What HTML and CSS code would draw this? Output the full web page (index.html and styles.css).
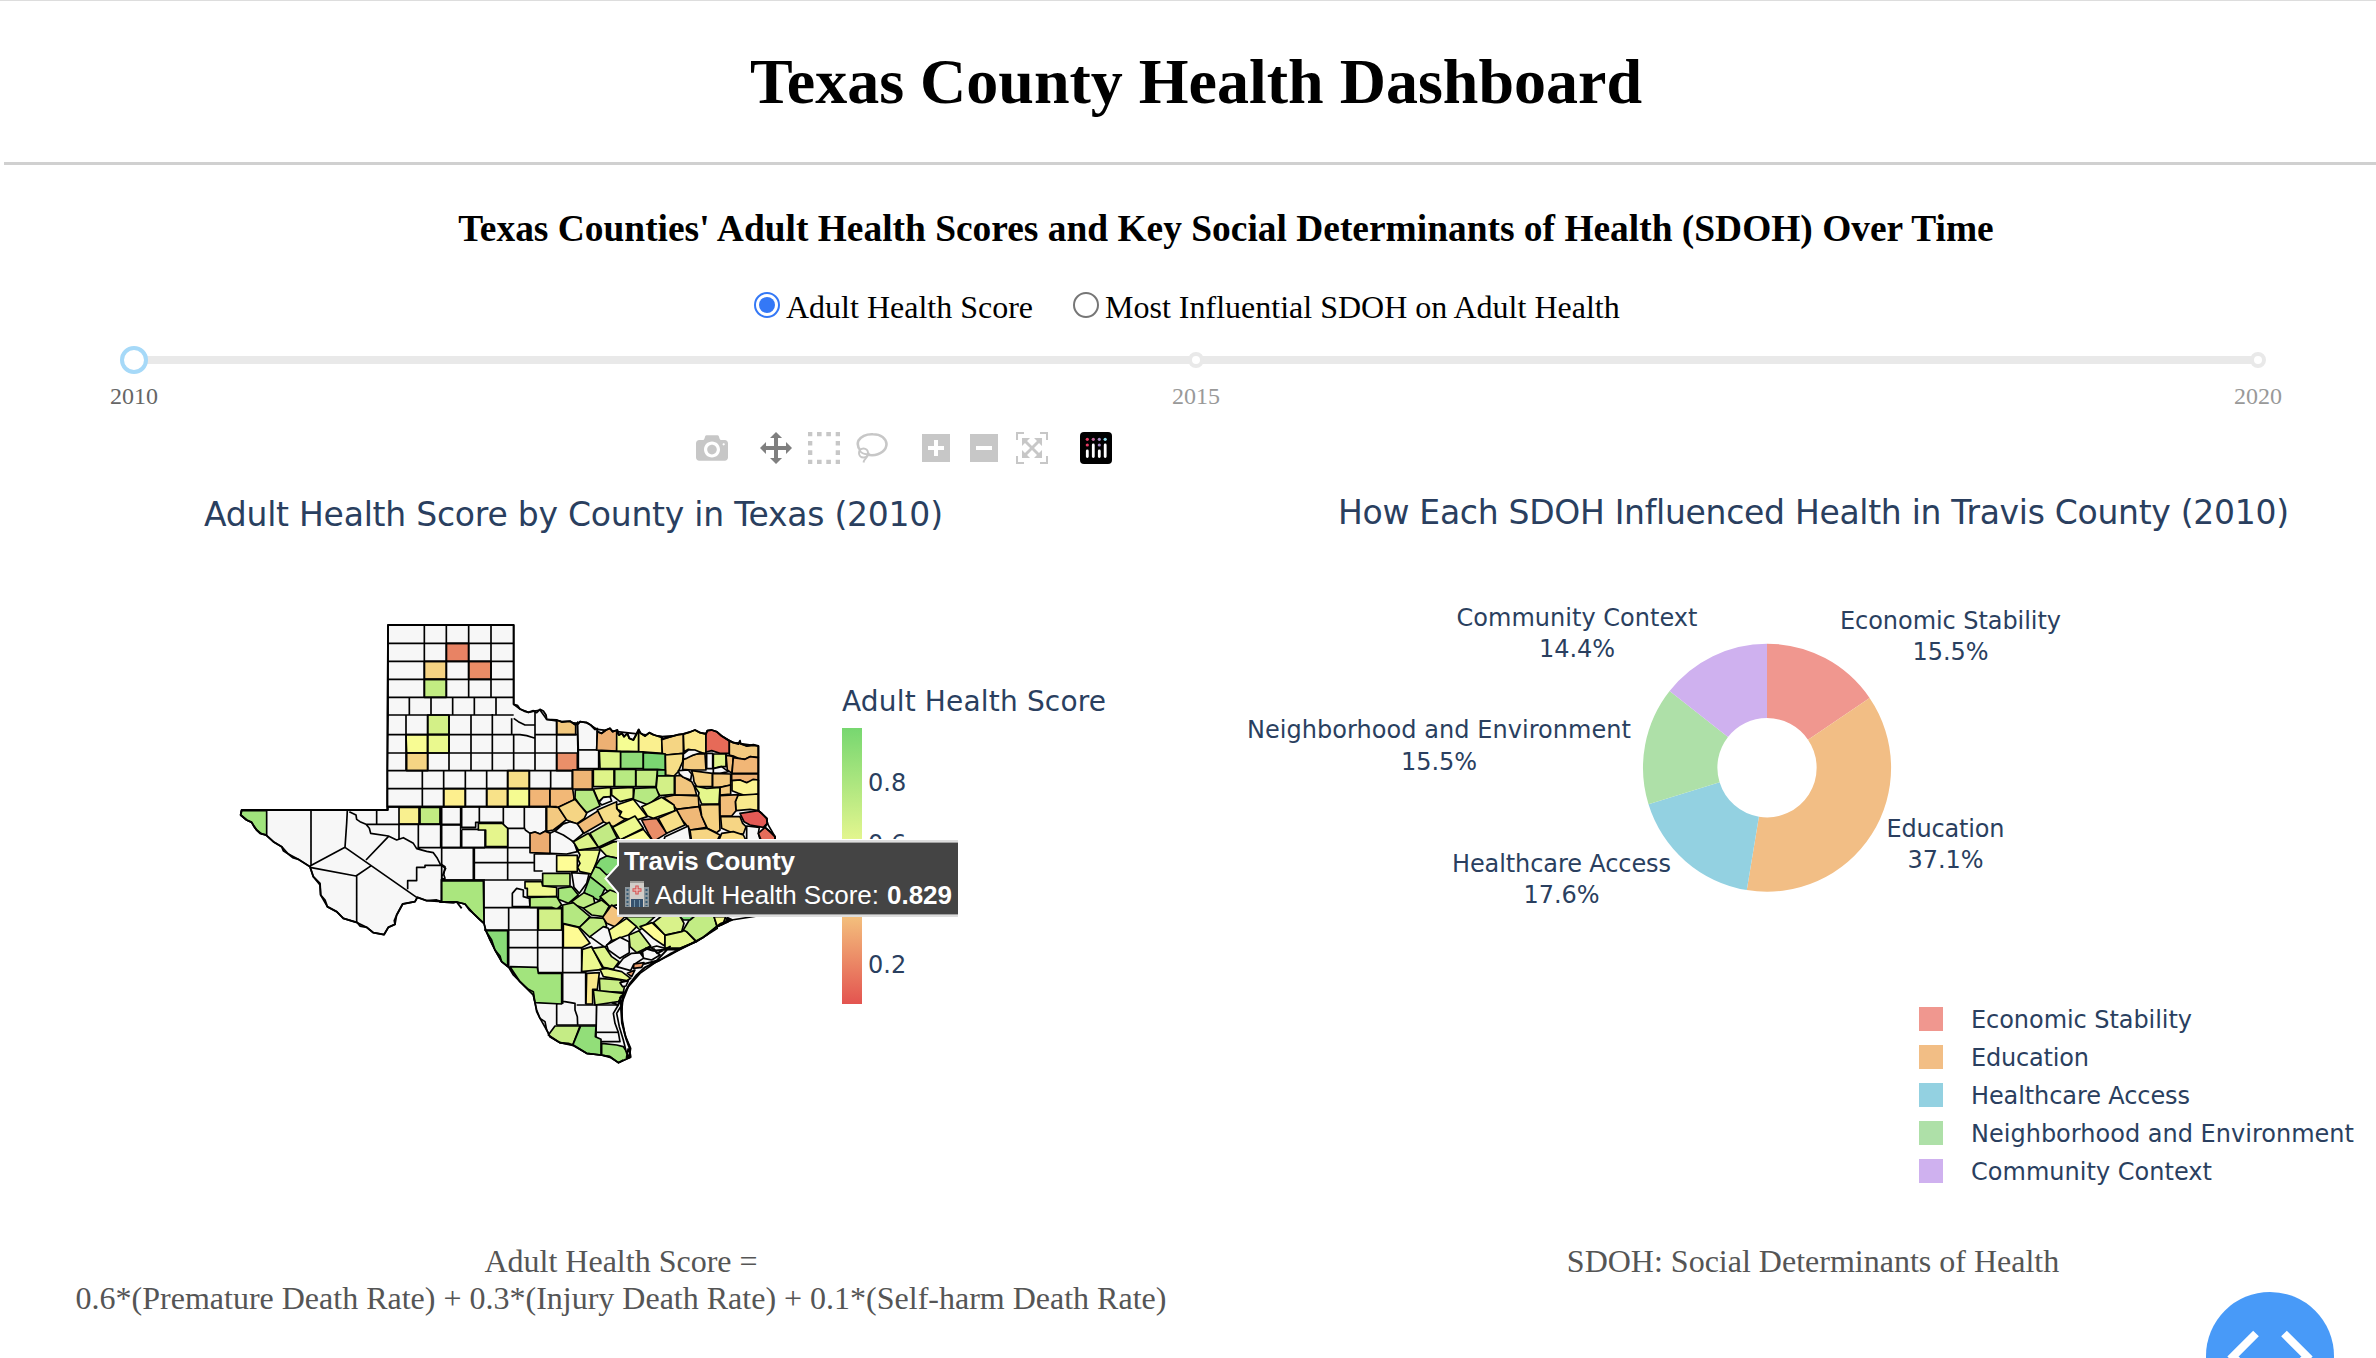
FILE: index.html
```html
<!DOCTYPE html>
<html lang="en">
<head>
<meta charset="utf-8">
<title>Texas County Health Dashboard</title>
<link rel="stylesheet" href="styles.css">
</head>
<body>
<header class="page-header"><h1>Texas County Health Dashboard</h1></header>
<main>
<h2>Texas Counties' Adult Health Scores and Key Social Determinants of Health (SDOH) Over Time</h2>
<div class="options">
<label class="option"><span class="radio checked"></span>Adult Health Score</label>
<label class="option"><span class="radio"></span>Most Influential SDOH on Adult Health</label>
</div>
<div class="slider">
<div class="rail"><span class="handle"></span><span class="dot"></span><span class="dot"></span></div>
<div class="marks"><span class="active">2010</span><span>2015</span><span>2020</span></div>
</div>
<div class="charts">
<section class="chart">
<div class="modebar">
<div class="tools"><svg viewBox="0 0 1000 1000"><path transform="matrix(1 0 0 -1 0 850)" d="m500 450c-83 0-150-67-150-150 0-83 67-150 150-150 83 0 150 67 150 150 0 83-67 150-150 150z m400 150h-120c-16 0-34 13-39 29l-31 93c-6 15-23 28-40 28h-340c-16 0-34-13-39-28l-31-94c-6-15-23-28-40-28h-120c-55 0-100-45-100-100v-450c0-55 45-100 100-100h800c55 0 100 45 100 100v450c0 55-45 100-100 100z m-400-550c-138 0-250 112-250 250 0 138 112 250 250 250 138 0 250-112 250-250 0-138-112-250-250-250z m365 380c-19 0-35 16-35 35 0 19 16 35 35 35 19 0 35-16 35-35 0-19-16-35-35-35z"/></svg></div>
<div class="tools">
<svg class="on" viewBox="0 0 1000 1000"><path transform="matrix(1 0 0 -1 0 850)" d="m1000 350l-187 188 0-125-250 0 0 250 125 0-188 187-187-187 125 0 0-250-250 0 0 125-188-188 186-187 0 125 252 0 0-250-125 0 187-188 188 188-125 0 0 250 250 0 0-126 187 188z"/></svg>
<svg viewBox="0 0 32 32"><path d="M0 0h4.3v4.3H0zM9 0h4.6v4.3H9zM18.3 0h4.6v4.3h-4.6zM27.7 0H32v4.3h-4.3zM0 9h4.3v4.6H0zM27.7 9H32v4.6h-4.3zM0 18.3h4.3v4.6H0zM27.7 18.3H32v4.6h-4.3zM0 27.7h4.3V32H0zM9 27.7h4.6V32H9zM18.3 27.7h4.6V32h-4.6zM27.7 27.7H32V32h-4.3z"/></svg>
<svg viewBox="0 0 32 32"><g fill="none" stroke="#c7c7c7" stroke-width="2.6"><path d="M4.5 18.5C1.5 15 1 12 2.5 8.500 6 3 12 2 17 2.200c8 0 13 4 13.500 9.800 0 6-6 11-14.500 11.200-2 0-3-.2-4.500-.6"/><circle cx="7.500" cy="21" r="4.500" stroke-width="2"/><path d="M3.500 18.500c3 4 6 4 9 3.500-1 4-4 4-5 8.500" stroke-width="2"/></g></svg>
</div>
<div class="tools">
<svg viewBox="0 0 32 32"><path fill-rule="evenodd" d="M2 2h28v28H2zM14 8v6H8v4h6v6h4v-6h6v-4h-6V8z"/></svg>
<svg viewBox="0 0 32 32"><path fill-rule="evenodd" d="M2 2h28v28H2zM8 14v4h16v-4z"/></svg>
<svg viewBox="0 0 1000 1000"><path transform="matrix(1 0 0 -1 0 850)" d="m250 850l-187 0-63 0 0-62 0-188 63 0 0 188 187 0 0 62z m688 0l-188 0 0-62 188 0 0-188 62 0 0 188 0 62-62 0z m-875-938l0 188-63 0 0-188 0-62 63 0 187 0 0 62-187 0z m875 188l0-188-188 0 0-62 188 0 62 0 0 62 0 188-62 0z m-125 188l-1 0-93-94-156 156 156 156 92-93 2 0 0 250-250 0 0-2 93-92-156-156-156 156 94 92 0 2-250 0 0-250 0 0 93 93 157-156-157-156-93 94 0 0 0-250 250 0 0 0-94 93 156 157 156-157-93-93 0 0 250 0 0 250z"/></svg>
</div>
<div class="tools"><svg viewBox="0 0 32 32"><rect width="32" height="32" rx="4" fill="#000"/><g stroke="#fff" stroke-width="2.800" stroke-linecap="round"><path d="M7.300 19v5.500M13.300 13v11.500M19.300 19v5.500M25.200 13v11.500"/></g><g fill="#e93b62"><circle cx="7.300" cy="7.300" r="1.600"/><circle cx="7.300" cy="13" r="1.600"/></g><circle cx="13.300" cy="7.300" r="1.600" fill="#c4689c"/><g fill="#a78bc4"><circle cx="19.300" cy="7.300" r="1.600"/><circle cx="19.300" cy="13" r="1.600"/></g><circle cx="25.200" cy="7.300" r="1.600" fill="#8edcec"/></svg></div>
</div>
<svg class="plot" viewBox="0 470 1188 740">
<defs><linearGradient id="scale" x1="0" y1="0" x2="0" y2="1"><stop offset="0" stop-color="#77d770"/><stop offset=".5" stop-color="#fdfd96"/><stop offset="1" stop-color="#e35450"/></linearGradient></defs>
<text class="title" x="204" y="526" textLength="739">Adult Health Score by County in Texas (2010)</text>
<g class="map">
<!-- central and southern counties -->
<g transform="translate(440 780) scale(.33333)">
<path class="land" d="M0 80H407L600 0H955V92L980 115 984 140 1000 175 1000 400 875 420 830 440 768 485 720 508 690 525 650 545 600 580 565 620 545 670 545 720 555 770 568 800 572 832 535 848 510 832 483 825 440 820 400 795 360 788 330 770 320 750 300 715 290 690 285 668 280 645 240 605 210 565 185 545 165 510 150 480 137 450 132 430 100 400 75 372 50 366 40 368 0 366Z"/>
<path d="M2 80V203M65 80V145M118 80V127M190 80V138L203 145V300M253 80V143L256 150 270 160 285 156 300 162 315 154 330 160M318 80V156M2 135H62M65 142H107V127H187M203 145H253M65 150V203M65 148H135V203M0 203H282M103 203V300M206 248H103M206 248H282M283 222V273H308M283 222H350M103 248V300M0 300H305M132 303V430M217 380 217 340 230 325 250 330 250 350 268 355 270 380ZM132 383H370M206 383V560M293 383V580M368 375V672M132 450H368M206 503H425M293 578H440M425 503V578M437 578V672M350 672V735M350 672 370 664 405 670 405 690 412 710 413 735M410 675H470V757H535M350 735H468M330 160 345 152 370 160 390 175 403 190 412 215 380 222 330 220M345 152 370 130 400 128 425 145 403 190M0 250 15 260 12 280 3 292 15 300"/>
<path fill="#e5f58c" d="M115 130H187L203 145V200H137V150H115Z"/>
<path fill="#ecac71" d="M270 160 285 156 300 162 315 154 330 160V220L270 218Z"/>
<path fill="#fefd96" d="M350 226H412V275H350Z"/>
<path fill="#f0fa90" d="M412 210 480 210 470 245 455 282 420 275 413 262 420 250 414 238 420 225Z"/>
<path fill="#dcf389" d="M403 185 448 160 478 202 415 210Z"/>
<path fill="#c2ea84" d="M450 160 508 127 532 175 478 202Z"/>
<path fill="#dbf389" d="M478 205 580 160V250L535 235 500 228Z"/>
<path fill="#82d975" d="M465 260 480 238 500 228 535 235V280L500 285Z"/>
<path fill="#a7e67e" d="M450 290 465 260 480 265 500 285 540 270V345L515 345 490 322Z"/>
<path fill="#8fdd79" d="M432 338 450 290 495 325 478 362 445 345Z"/>
<path fill="#c2ec82" d="M308 280H390V318H308Z"/>
<path fill="#f7f7f7" d="M395 278 447 282 440 310 418 340 402 322Z"/>
<path fill="#a5e57d" d="M355 325 395 320 415 345 385 370 355 358Z"/>
<path fill="#eff990" d="M255 305 305 305 308 318 350 322V350H262V325H255Z"/>
<path fill="#b5e981" d="M270 352 350 350 365 375 350 388 335 382H270Z"/>
<path fill="#aae67e" d="M0 303H130L132 430 100 400 75 372 50 366 0 366Z"/>
<path fill="#bdea83" d="M395 365 432 338 460 350 465 372 440 388 405 375Z"/>
<path fill="#bfeb83" d="M430 385 485 360 508 378 490 410 455 405Z"/>
<path fill="#bfeb83" d="M480 350 510 330 550 345V370L510 380Z"/>
<path fill="#b4e881" d="M368 375 400 368 450 410 420 442 368 430Z"/>
<path fill="#d2f088" d="M295 386H365V450H295Z"/>
<path fill="#c2ec84" d="M418 442 450 412 492 415 500 438 450 472Z"/>
<path fill="#f4c47d" d="M488 412 515 375 560 405 525 440 500 430Z"/>
<path fill="#fefb94" d="M370 432 415 442 450 490 425 503H370Z"/>
<path fill="#b8e981" d="M555 410H645L600 450Z"/>
<path fill="#f5fb92" d="M500 455 560 415 590 440 565 465 515 482Z"/>
<path fill="#f7f7f7" d="M450 470 490 440 505 445 515 480 495 502Z"/>
<path fill="#fefd95" d="M600 440 636 428 675 465 674 498 640 475Z"/>
<path fill="#d9f28a" d="M640 428 665 408H720L732 430 725 455 675 465Z"/>
<path fill="#e3f68c" d="M675 466 725 455 735 450 768 485 720 505 675 505Z"/>
<path fill="#c2ec84" d="M730 450 755 408H822L832 445 770 485 740 455Z"/>
<path fill="#7ed873" d="M715 405H768L750 420 730 420Z"/>
<path fill="#f5fa91" d="M822 410H855L865 425 832 440Z"/>
<path fill="#cdef87" d="M567 465 597 452 632 498 590 518 570 500Z"/>
<path fill="#f7f7f7" d="M500 495 540 472 567 485 568 518 540 535 505 510Z"/>
<path fill="#edf88f" d="M427 508 455 500 490 568 425 575Z"/>
<path fill="#e0f58b" d="M457 505 495 500 515 530 537 545 520 568 490 562Z"/>
<path fill="#fae98c" d="M440 580 478 578 472 628H458V672H438Z"/>
<path fill="#c8ed85" d="M478 595 540 600 555 610 550 637 480 634Z"/>
<path fill="#e8f78d" d="M480 568 500 565 545 575 572 595 560 602 490 590Z"/>
<path fill="#cdef86" d="M460 630 550 640 535 665 465 675Z"/>
<path fill="#f7f7f7" d="M530 560 550 535 575 520 608 518 610 535 580 555 572 572ZM600 518 630 500 660 525 635 540 612 535ZM540 608 565 602 558 618 548 620Z"/>
<path fill="#eb9c6b" d="M582 552 612 548 605 562 580 565ZM562 580 585 570 575 590Z"/>
<path fill="#89db77" d="M137 452H203V560L185 545 165 510 155 480Z"/>
<path fill="#a2e47d" d="M210 560 292 562 295 580H365V672L285 668 280 645 240 605Z"/>
<path fill="#f7f7f7" d="M470 675 535 675 520 700 525 730 535 757 540 785 480 785 468 770Z"/><path d="M470 757H535"/>
<path fill="#c5ec85" d="M345 738H420L398 796 360 788 325 765Z"/>
<path fill="#92de79" d="M422 738H468L466 770 483 778V825L440 820 398 796Z"/>
<path fill="#a3e57d" d="M485 790 530 795 550 800 570 832 535 848 510 830 485 825Z"/>
<path d="M0 366 40 368 50 366 75 372 88 390 100 400 118 418 132 430 137 450 150 480 165 510 180 528 185 545 205 560 220 585 240 605 265 628 280 635 285 668 290 695 300 715 315 725 320 750 330 770 360 788 385 790 400 795 440 820 483 825 510 830 535 848 550 840"/>
<path fill="#fff" d="M545 675 530 700 538 740 550 780 560 820 568 830 572 805 555 765 547 720Z"/>
<path d="M872 420 855 415 850 432 830 440 800 465 768 485 720 505 675 505 650 498 625 505 600 518"/>
<path stroke-width="6" d="M870 420 840 432 790 472 720 508 690 522 660 540 615 562 590 585 570 610 550 645 543 685 546 730 558 775 569 805 571 832M615 505 640 512 690 508 718 510M515 668 535 675 545 645M550 640 545 690 540 650M565 805 560 832 571 832M850 425 876 420 860 412M640 505 652 520 690 500 650 542 612 552"/>
</g>
<!-- far west -->
<g transform="translate(230 790) scale(.33333)">
<path class="land" d="M635 50H473V60H35L32 75 50 90 65 97 80 120 108 135 130 155 155 170 175 192 205 208 240 230 250 260 270 285 272 315 292 350 320 365 340 385 382 398 410 412 430 428 462 434 475 412 495 403 500 375 518 342 555 335 562 322 590 332 635 335Z"/>
<path fill="#a0e47c" d="M35 62H110V135L95 132 80 120 65 97 50 90 32 75Z"/>
<path fill="#f9f08f" d="M507 52H567V102H507Z"/><path fill="#c2ec82" d="M570 52H630V102H570Z"/>
<path d="M243 60V228M352 62 350 100 345 172 240 228M240 232 378 258 425 226M345 172 560 322M380 258V398M408 210 475 140M358 65 378 75 380 88 390 95 408 103 418 115 422 130 475 138 500 150 520 143 550 160 560 176 590 184 610 188 622 205 632 225 647 235 640 250 645 265 632 270M533 298V272H560V232H585V226H632M634 270V335M632 270H765M730 175V270M562 173H765M408 103H692M440 60V103M507 103V150M565 103V173M632 50V173M692 50V173M473 50H700"/>
<path stroke-width="5.500" d="M473 0V60H35L32 75 50 90 65 97 72 110 80 120 90 130 108 135 130 155 155 170 160 182 175 192 188 203 205 208 240 230 250 260 270 280 272 315 285 330 292 350 320 365 340 385 382 398 390 408 410 412 430 428 462 434 475 412 495 403 493 392 500 375 518 342 555 335 562 322 590 332 620 330 635 335 680 336 695 355"/>
</g>
<!-- panhandle -->
<g transform="translate(370 610) scale(.33333)">
<path class="land" d="M54 45H431V283L450 297 475 307 510 300 530 328 575 335 625 340V535L617 590H52V315Z"/>
<path fill="#e88364" d="M229 100H296V154H229Z"/><path fill="#eb8c66" d="M296 154H363V208H296Z"/>
<path fill="#f5d383" d="M163 154H229V208H163Z"/><path fill="#c2ec82" d="M163 208H229V262H163Z"/>
<path fill="#d3f087" d="M173 315H237V374H173Z"/><path fill="#f8fc93" d="M108 374H173V429H110Z"/><path fill="#eaf98e" d="M173 374H237V429H173Z"/>
<path fill="#f5d584" d="M110 429H173V482H110Z"/><path fill="#f6de87" d="M413 482H478V536H413Z"/>
<path fill="#fdef8e" d="M221 536H286V590H221Z"/><path fill="#f8e289" d="M350 536H413V590H350Z"/><path fill="#f5fb91" d="M413 536H478V590H413Z"/>
<path fill="#f1b576" d="M478 536H540V590H478Z"/><path fill="#f2b877" d="M540 536H614L612 570 565 592H540Z"/>
<path fill="#f2c87e" d="M560 330 575 335 600 333 617 345V374H560Z"/><path fill="#ea8f69" d="M560 429H622V482H560Z"/>
<path d="M163 45V262M229 45V262M296 45V262M363 45V262M54 100H431M54 154H431M54 208H431M54 262H431M118 262V315M183 262V315M248 262V315M313 262V315M378 262V315M54 315H431M108 315V482M173 315V482M237 315V482M303 315V482M367 312V482M431 374V482M425 325V374M431 325 445 335 465 345 493 345M495 300V482M560 330V482M625 340V482M52 374H450L470 377 493 384M495 374H625M52 429H560M625 420H690M52 482H715M157 482V590M221 482V590M286 482V590M350 482V590M413 482V590M478 482V536M542 482V536M607 482V536M52 536H617M0 600H52M52 590H560"/>
<path stroke-width="5.500" d="M52 600V480L54 315V45H431V283L442 286 450 297 462 303 475 307 490 302 500 308 510 298 520 303 528 315 530 328 560 330 575 336 600 334 617 345 625 335"/>
</g>
<!-- north and east -->
<g transform="translate(520 690) scale(.33333)">
<path class="land" d="M172 104 200 98 232 118 425 140 560 130 605 138 640 158 715 168V362L740 385 742 400 765 440V455H166V350L158 297V240H175Z"/>
<path fill="#f7f7f7" d="M173 104 180 95 200 98 212 105 225 118 232 116 230 180H175Z"/>
<path fill="#f7f7f7" d="M175 180H236V236H175Z"/>
<path fill="#edb073" d="M232 125 245 130 258 120 270 115 278 125 292 120 290 183 230 180Z"/>
<path fill="#f5fd93" d="M290 123 297 135 306 130 312 140 322 130 328 145 340 150 348 135 356 120V185L290 183Z"/>
<path fill="#faf08f" d="M356 120 362 130 375 138 388 128 400 134 412 138 425 142 427 190 356 185Z"/>
<path fill="#f5d583" d="M425 146 445 142 460 138 475 134 490 132V190L440 195 427 190Z"/>
<path fill="#fce88c" d="M490 132 510 126 525 120 540 128 558 132V190L540 188 525 182 505 178 492 185Z"/>
<path fill="#e66a58" d="M558 132 562 122 575 120 590 125 605 138 628 153V190H600L575 182 558 186Z"/>
<path fill="#f3cb80" d="M628 153 640 158 660 160 680 168 700 166 715 168V203L690 200 675 208 655 205 640 198 628 195Z"/>
<path fill="#def48a" d="M238 183 302 185V236H240Z"/><path fill="#8fdc78" d="M302 186H370V236H302Z"/><path fill="#7ad672" d="M370 188 436 192V240L412 238H370Z"/>
<path fill="#f6de87" d="M436 195 490 190 488 215 475 245 462 258 437 255Z"/><path fill="#83d975" d="M412 240H436V258H412Z"/>
<path fill="#f4cb80" d="M490 208 505 200 530 192 555 192 558 240 515 240 488 238Z"/>
<path fill="#f7f7f7" d="M490 192 505 180 525 180 545 188 520 195 500 205 490 208ZM560 190H578V236H560Z"/>
<path fill="#e0f48a" d="M580 192H618V230L602 230 580 236Z"/><path fill="#f0bd79" d="M618 195 640 200 636 250 622 240Z"/>
<path fill="#f1b676" d="M640 203 655 205 675 208 690 200 715 203V250H636Z"/>
<path fill="#f7f7f7" d="M580 236 605 230 625 245 600 250 580 250Z"/>
<path fill="#eeb575" d="M158 240H217V297H158Z"/><path fill="#dff489" d="M220 238H282V290H220Z"/><path fill="#b8ea82" d="M284 238H347V290H284Z"/><path fill="#c5ec84" d="M348 240H412L408 290H348Z"/>
<path fill="#d3f087" d="M412 258H463V313L420 317 408 300Z"/>
<path fill="#f1c57e" d="M465 258 480 256 515 275 523 290 530 315H465Z"/>
<path fill="#f7f7f7" d="M475 242 505 240 515 252 512 270 490 262 478 252Z"/>
<path fill="#f6d182" d="M515 242 577 250V290H530L522 275 520 260Z"/><path fill="#f5cb80" d="M578 250 632 252V285L600 292H578Z"/>
<path fill="#efb274" d="M635 252H715V272L680 278 660 270 635 272Z"/>
<path fill="#fbf391" d="M636 272 660 270 680 278 700 268 715 270V312L680 318 655 310 636 302Z"/>
<path fill="#f4ca80" d="M600 292 632 285V312L600 315Z"/><path fill="#e5f78c" d="M523 288 560 295 600 292 597 342H545L535 318 537 308Z"/>
<path fill="#f8e98c" d="M652 316 715 312V362L690 358 648 362 646 335Z"/><path fill="#f2bd79" d="M600 317 655 314 646 335 648 362 635 378H600Z"/>
<path fill="#f1c67e" d="M430 322 465 315 535 318 537 350 470 358 455 340Z"/>
<path fill="#f0b877" d="M470 358 537 350 545 378 560 412 510 420 495 400 475 378Z"/>
<path fill="#f5d182" d="M540 345 598 343 600 420 590 428 562 415 545 378Z"/><path fill="#f6d584" d="M602 380H660L668 400 678 410 670 432 640 430 605 415Z"/>
<path fill="#f7f7f7" d="M680 408 718 412 715 430 722 455H680Z"/>
<path fill="#e35a55" d="M660 370 715 362 725 370 740 385 742 400 730 412 690 405 672 395Z"/>
<path fill="#e66d5a" d="M735 412 750 425 765 440V455H725L715 430Z"/>
<path fill="#fadd87" d="M605 430 640 425 670 435 680 455H595Z"/><path fill="#f6d583" d="M510 420 560 415 600 435 590 455H515Z"/>
<path fill="#f7f7f7" d="M435 440 505 408 512 455H430Z"/>
<path fill="#e5f78c" d="M220 297 272 292V320L250 322 236 335Z"/>
<path fill="#f7f7f7" d="M238 336 250 322 270 320 275 333 245 345Z"/>
<path fill="#b8e983" d="M166 300H220L240 348 200 368 180 345 165 325Z"/>
<path fill="#e7f88c" d="M275 295 340 292V325L300 335 275 315Z"/><path fill="#b6e982" d="M343 295 408 292 418 318 385 345 340 328Z"/>
<path fill="#f3c980" d="M80 350 115 352 140 388 120 405 100 420 80 424Z"/><path fill="#f5d584" d="M115 352 165 328 200 370 193 385 170 402 140 390Z"/>
<path fill="#f7f7f7" d="M105 424 130 402 150 395 175 402 190 430 160 455 130 435Z"/>
<path fill="#f1bb79" d="M172 402 235 362 252 395 192 430Z"/>
<path fill="#f6dd88" d="M232 360 290 335 290 355 315 388 280 410 250 395Z"/>
<path fill="#fcfb94" d="M290 345 340 328 382 380 345 392 310 385 298 378 305 365 292 358Z"/>
<path fill="#eff990" d="M365 350 425 322 462 345 465 362 400 385 382 378Z"/>
<path fill="#e98d68" d="M365 390 410 385 440 430 400 455 385 430Z"/><path fill="#f8df88" d="M415 385 470 360 495 405 440 430Z"/>
<path fill="#edf98f" d="M278 412 345 378 370 415 300 450Z"/><path fill="#c2ea84" d="M210 430 268 397 292 445 235 472Z"/>
<path fill="#f9fb94" d="M300 450 370 418 400 455Z"/><path fill="#dcf389" d="M160 455 205 430 235 472 175 480Z"/>
<path stroke-width="5.500" d="M172 102 180 95 200 98 212 105 225 118 232 116 232 125 245 130 258 120 270 115 278 125 292 120 297 135 306 130 312 140 322 130 328 145 340 150 348 135 356 118 362 130 375 138 388 128 400 134 412 138 425 140 428 148 445 142 475 134 490 132 510 126 525 120 540 128 558 132 562 122 575 120 590 125 605 138 628 152 640 158 655 162 660 152 662 162 680 168 700 164 715 168V362L725 370 740 385 742 400 735 412 750 425 765 440V455"/>
</g>
</g>
<text class="bar-title" x="842" y="711" textLength="264">Adult Health Score</text>
<rect x="842" y="728" width="20" height="276" fill="url(#scale)"/>
<text class="tick" x="868" y="791">0.8</text><text class="tick" x="868" y="851.500">0.6</text><text class="tick" x="868" y="973">0.2</text>
<g class="tip">
<rect x="618" y="839" width="340" height="78" fill="#fff"/>
<path fill="#444" stroke="#fff" stroke-width="2" d="M618 841.500H959V915.500H618V893L605.500 878.500 618 865Z"/>
<path fill="#fff" d="M958 838h4v80h-4z"/><path d="M617 841H958M617 916H958" stroke="#bbb"/>
<text x="624" y="870" font-weight="bold" textLength="171">Travis County</text>
<text x="655" y="904" textLength="224">Adult Health Score:</text><text x="887" y="904" font-weight="bold" textLength="65">0.829</text>
<path fill="#8b969c" d="M625 887h6v20h-6zM643 887h6v20h-6z"/><path fill="#d1cdc8" d="M630 882h14v25h-14z"/><path fill="#9c9a96" d="M630 881h14v2h-14z"/><path d="M637 885.500v9M632.500 890h9" stroke="#d65553" stroke-width="3.400"/><path d="M637 886.500v7M633.500 890h7" stroke="#eed8d5" stroke-width="1"/><path fill="#35516d" d="M631 899h12v8h-12z"/><path d="M634.500 900v7M639.500 900v7" stroke="#7395ab"/><path d="M627.500 889v17M646.500 889v17" stroke="#365a74" stroke-width="2" stroke-dasharray="2 2"/>
</g>
</svg>
<p class="note">Adult Health Score =<br>0.6*(Premature Death Rate) + 0.3*(Injury Death Rate) + 0.1*(Self-harm Death Rate)</p>
</section>
<section class="chart side">
<svg class="plot" viewBox="1188 470 1188 740">
<text class="title" x="1338" y="524" textLength="951">How Each SDOH Influenced Health in Travis County (2010)</text>
<path fill="#f0978f" d="M1767 643.700A124 124 0 0 1 1869.600 698L1808 739.800A49.600 49.600 0 0 0 1767 718.100Z"/>
<path fill="#f2be85" d="M1869.600 698A124 124 0 0 1 1746.800 890.100L1758.900 816.700A49.600 49.600 0 0 0 1808 739.800Z"/>
<path fill="#93d1e1" d="M1746.800 890.100A124 124 0 0 1 1648.500 804.200L1719.600 782.300A49.600 49.600 0 0 0 1758.900 816.700Z"/>
<path fill="#aee0a8" d="M1648.500 804.200A124 124 0 0 1 1669.600 691L1728 737A49.600 49.600 0 0 0 1719.600 782.300Z"/>
<path fill="#cfb1ef" d="M1669.600 691A124 124 0 0 1 1767 643.700V718.100A49.600 49.600 0 0 0 1728 737Z"/>
<g class="slice">
<text x="1577" y="626" textLength="241">Community Context</text><text x="1577" y="657">14.4%</text>
<text x="1950.500" y="629" textLength="221">Economic Stability</text><text x="1950.500" y="660">15.5%</text>
<text x="1439" y="738" textLength="384">Neighborhood and Environment</text><text x="1439" y="770">15.5%</text>
<text x="1945.500" y="837" textLength="118">Education</text><text x="1945.500" y="868">37.1%</text>
<text x="1561.500" y="872" textLength="219">Healthcare Access</text><text x="1561.500" y="903">17.6%</text>
</g>
<g class="legend">
<rect x="1919" y="1007" width="24" height="24" fill="#f0978f"/><text x="1971" y="1028" textLength="221">Economic Stability</text>
<rect x="1919" y="1045" width="24" height="24" fill="#f2be85"/><text x="1971" y="1066" textLength="118">Education</text>
<rect x="1919" y="1083" width="24" height="24" fill="#93d1e1"/><text x="1971" y="1104" textLength="219">Healthcare Access</text>
<rect x="1919" y="1121" width="24" height="24" fill="#aee0a8"/><text x="1971" y="1142" textLength="383">Neighborhood and Environment</text>
<rect x="1919" y="1159" width="24" height="24" fill="#cfb1ef"/><text x="1971" y="1180" textLength="241">Community Context</text>
</g>
</svg>
<p class="note">SDOH: Social Determinants of Health</p>
</section>
</div>
</main>
<button class="debug" aria-label="Toggle developer tools"><svg viewBox="0 0 128 128"><path d="M50 41.500 27 64.500 50 87.500M78 41.500 101 64.500 78 87.500"/></svg></button>
</body>
</html>
```
FILE: styles.css
```css
* { box-sizing: border-box; }
body { margin: 0; height: 1358px; overflow: hidden; position: relative; background: #fff; color: #000; font-family: "Liberation Serif", "Times New Roman", serif; border-top: 1px solid #ddd; }
.page-header { height: 164px; margin-left: 4px; padding: 44px 0 0 12px; border-bottom: 3px solid #d0d0d0; text-align: center; }
h1 { margin: 0; font-size: 64px; line-height: 74px; font-weight: bold; }
h2 { margin: 0; padding: 42px 0 0 76px; font-size: 37.44px; line-height: 44px; text-align: center; }
.options { display: flex; gap: 40px; padding: 36px 0 0 754px; font-size: 32px; line-height: 40px; }
.option { display: flex; align-items: center; gap: 6px; white-space: nowrap; }
.radio { width: 26px; height: 26px; margin-top: -5px; border: 2px solid #767676; border-radius: 50%; }
.radio.checked { border: 2px solid #3478f6; padding: 3px; background: #3478f6 content-box; }
.slider { padding: 19px 110px 0 126px; height: 80px; }
.rail { position: relative; display: flex; justify-content: space-between; align-items: center; height: 28px; background: linear-gradient(#e9e9e9, #e9e9e9) center / calc(100% - 16px) 8px no-repeat; }
.handle { width: 28px; height: 28px; margin: 0 -6px; border: 4px solid #a6d9f8; border-radius: 50%; background: #fff; }
.dot { width: 16px; height: 16px; border: 4px solid #e9e9e9; border-radius: 50%; background: #fff; }
.marks { display: flex; justify-content: space-between; margin: 8px -16px 0; font-size: 24px; line-height: 28px; color: #999; }
.marks .active { color: #666; }
.charts { display: grid; grid-template-columns: 1188px 1188px; }
.chart { display: flex; flex-direction: column; }
.modebar { display: flex; gap: 32px; height: 63px; padding: 25px 0 0 696px; }
.tools { display: flex; gap: 16px; }
.modebar svg { width: 32px; height: 32px; fill: #c7c7c7; }
.modebar .on { fill: #7f7f7f; }
.side { padding-top: 63px; }
.plot { display: block; width: 1188px; height: 740px; font-family: "DejaVu Sans", Verdana, sans-serif; font-variant-ligatures: none; fill: #2a3f5f; }
.title { font-size: 33px; }
.bar-title { font-size: 28px; }
.tick, .slice, .legend { font-size: 24px; }
.slice { text-anchor: middle; }
.map path { stroke: #000; stroke-linejoin: round; }
.map g { fill: none; stroke-width: 5; }
.map .land { fill: #f7f7f7; }
.tip { font: 26px "Liberation Sans", Arial, sans-serif; fill: #fff; }
.note { margin: 33px 0 0 54px; color: #555; font-size: 32px; line-height: 37px; text-align: center; }
.side .note { margin-left: 62px; }
.debug { position: absolute; left: 2206px; top: 1291px; width: 128px; height: 128px; padding: 0; border: 0; border-radius: 50%; background: #489af8; }
.debug svg { display: block; fill: none; stroke: #fff; stroke-width: 8; }
```
